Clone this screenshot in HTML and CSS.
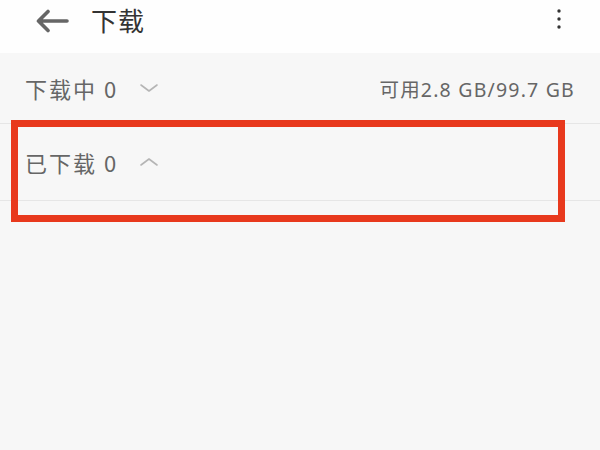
FILE: index.html
```html
<!DOCTYPE html>
<html lang="zh-CN">
<head>
<meta charset="utf-8">
<title>下载</title>
<link rel="stylesheet" href="styles.css">
</head>
<body>
<div class="screen">
  <header class="topbar">
    <div class="topbar-left">
      <svg class="back" width="34" height="24" viewBox="0 0 34 24" aria-hidden="true">
        <path d="M32 12H4M13 2.5L3.5 12L13 21.5" fill="none" stroke="#666" stroke-width="3.6" stroke-linecap="round" stroke-linejoin="round"/>
      </svg>
      <h1 class="title">下载</h1>
    </div>
    <svg class="more" width="6" height="22" viewBox="0 0 6 22" aria-hidden="true">
      <circle cx="3" cy="3" r="1.7" fill="#333"/>
      <circle cx="3" cy="11" r="1.7" fill="#333"/>
      <circle cx="3" cy="19" r="1.7" fill="#333"/>
    </svg>
  </header>

  <section class="group">
    <div class="group-head">
      <span class="label">下载中 0</span>
      <svg class="chev" width="20" height="10" viewBox="0 0 20 10" aria-hidden="true">
        <path d="M2 2L10 8L18 2" fill="none" stroke="#b5b5b5" stroke-width="1.6" stroke-linecap="round" stroke-linejoin="round"/>
      </svg>
      <span class="storage">可用2.8 GB/99.7 GB</span>
    </div>
  </section>

  <section class="group group-done">
    <div class="group-head">
      <span class="label">已下载 0</span>
      <svg class="chev" width="20" height="10" viewBox="0 0 20 10" aria-hidden="true">
        <path d="M2 8L10 2L18 8" fill="none" stroke="#b5b5b5" stroke-width="1.6" stroke-linecap="round" stroke-linejoin="round"/>
      </svg>
    </div>
    <div class="highlight"></div>
  </section>
</div>
</body>
</html>
```

FILE: styles.css
```css
* { box-sizing: border-box; }
html, body {
  margin: 0;
  padding: 0;
}
body {
  width: 600px;
  height: 450px;
  background: #f7f7f7;
  font-family: "Noto Sans", "Noto Sans CJK SC", sans-serif;
  overflow: hidden;
}
.screen {
  width: 600px;
  height: 450px;
  position: relative;
}
.topbar {
  height: 53px;
  background: #fefefe;
  display: flex;
  align-items: flex-start;
  justify-content: space-between;
  padding: 0 38px 0 35px;
}
.topbar-left {
  display: flex;
  align-items: center;
  height: 40px;
}
.back {
  display: block;
  margin-top: 1px;
}
.title {
  margin: 0 0 0 22px;
  font-family: "Noto Sans CJK SC", sans-serif;
  font-size: 26px;
  font-weight: 400;
  color: #333;
  line-height: 40px;
  letter-spacing: 1px;
}
.more {
  display: block;
  margin-top: 8px;
}
.group {
  border-bottom: 1px solid #e6e6e6;
}
.group-head {
  display: flex;
  align-items: center;
  height: 70px;
  padding: 0 25px 0 25px;
}
.group-done {
  position: relative;
}
.group-done .group-head {
  height: 76px;
}
.label {
  font-family: "Noto Sans CJK SC", sans-serif;
  font-size: 22px;
  color: #666;
  letter-spacing: 2px;
}
.chev {
  display: block;
  margin-left: 21px;
}
.storage {
  margin-left: auto;
  font-size: 19.5px;
  color: #666;
  letter-spacing: 1.2px;
}
.highlight {
  position: absolute;
  left: 11px;
  top: -4px;
  width: 554px;
  height: 102px;
  border: 7px solid #e8391d;
  pointer-events: none;
}
```
